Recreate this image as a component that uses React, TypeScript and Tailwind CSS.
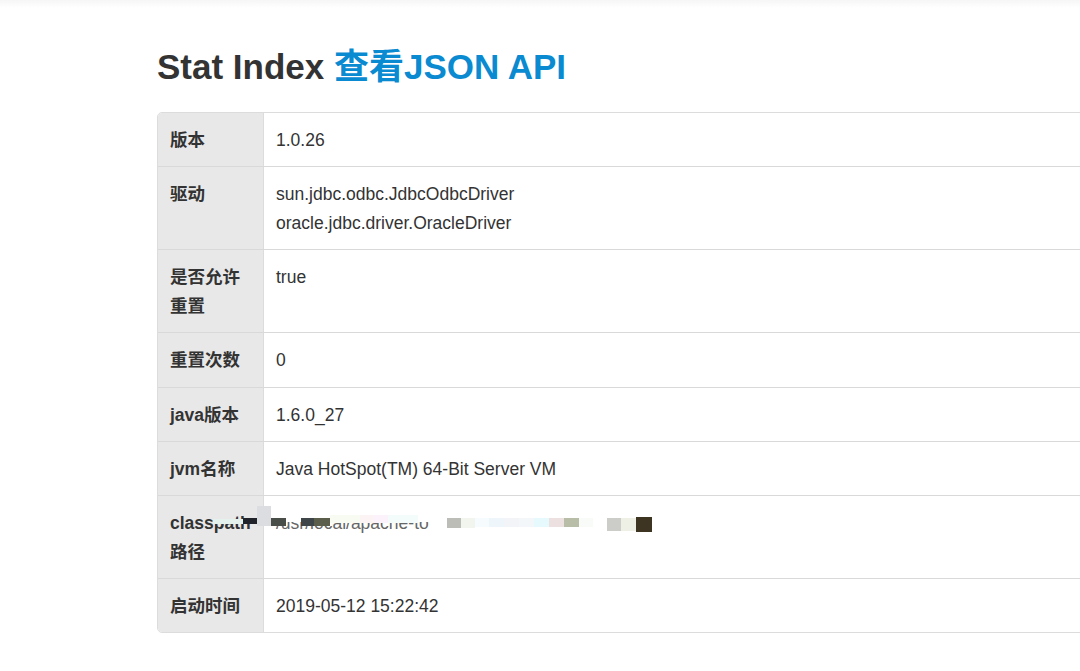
import React from "react";

const rows: { label: string; values: string[]; mosaic?: boolean }[] = [
  { label: "版本", values: ["1.0.26"] },
  {
    label: "驱动",
    values: ["sun.jdbc.odbc.JdbcOdbcDriver", "oracle.jdbc.driver.OracleDriver"],
  },
  { label: "是否允许重置", values: ["true", "\u00a0"] },
  { label: "重置次数", values: ["0"] },
  { label: "java版本", values: ["1.6.0_27"] },
  { label: "jvm名称", values: ["Java HotSpot(TM) 64-Bit Server VM"] },
  { label: "classpath路径", values: ["/usr/local/apache-to", "\u00a0"], mosaic: true },
  { label: "启动时间", values: ["2019-05-12 15:22:42"] },
];

// blurred-out pixels over the classpath value, [left, top, width, height, colour]
const blocks: [number, number, number, number, string][] = [
  [55, 406, 48, 5, "#e4f1ec"],
  [85, 405, 14, 6, "#20232a"],
  [99, 393, 14, 20, "#dcdde0"],
  [118, 397, 375, 12, "#ffffff"],
  [113, 405, 15, 8, "#4a4e48"],
  [143, 405, 13, 8, "#3f464a"],
  [156, 405, 16, 8, "#5b5e4a"],
  [172, 402, 30, 8, "#f8fbf2"],
  [202, 402, 14, 8, "#fcf3f4"],
  [216, 402, 14, 8, "#fbf2fb"],
  [230, 402, 30, 8, "#f3fbfb"],
  [289, 405, 14, 10, "#bdbdb8"],
  [303, 405, 14, 10, "#f2f4ee"],
  [317, 405, 14, 9, "#f6fbfd"],
  [331, 405, 15, 9, "#eef6fb"],
  [346, 405, 15, 9, "#f3f4f8"],
  [361, 405, 15, 9, "#f3f7fa"],
  [376, 405, 15, 9, "#e6f9fd"],
  [391, 405, 15, 9, "#ece0e0"],
  [406, 405, 15, 9, "#b8bda8"],
  [421, 405, 14, 9, "#f8fbf8"],
  [449, 405, 14, 13, "#ccccc8"],
  [463, 405, 15, 13, "#eef0e6"],
  [478, 404, 16, 15, "#3d3421"],
];

export default function App() {
  return (
    <div
      className="relative w-[1080px] h-[671px] overflow-hidden bg-white text-[#333]"
      style={{ fontFamily: '"Liberation Sans", Arial, "Noto Sans CJK SC", sans-serif' }}
    >
      <div className="h-[8px] bg-gradient-to-b from-[#f6f6f6] to-white" />
      <div className="pl-[157px] pt-[40px]">
        <h1 className="text-[35px] leading-[38px] font-bold text-[#333] mb-[26px]">
          Stat Index <a className="text-[#0a8ad0]">查看JSON API</a>
        </h1>
        <div className="relative w-[1000px] border border-[#dcdcdc] rounded-[5px] overflow-hidden text-[17.5px] leading-[29px]">
          {rows.map((row, i) => {
            const pad = i === 3 ? "pt-[13px] pb-[12px]" : "pt-[13px] pb-[11px]";
            return (
              <div
                key={row.label}
                className={`flex ${i > 0 ? "border-t border-[#d9d9d9]" : ""}`}
              >
                <div className={`w-[106px] shrink-0 bg-[#e8e8e8] border-r border-[#dcdcdc] px-3 ${pad} font-bold break-all`}>
                  {row.label}
                </div>
                <div className={`flex-1 px-3 ${pad} ${row.mosaic ? "text-[#666]" : ""}`}>
                  {row.values.map((v, j) => (
                    <div key={j}>{v}</div>
                  ))}
                </div>
              </div>
            );
          })}
          {blocks.map(([l, t, w, h, c], k) => (
            <div
              key={k}
              className="absolute"
              style={{ left: l, top: t, width: w, height: h, background: c }}
            />
          ))}
        </div>
      </div>
    </div>
  );
}
